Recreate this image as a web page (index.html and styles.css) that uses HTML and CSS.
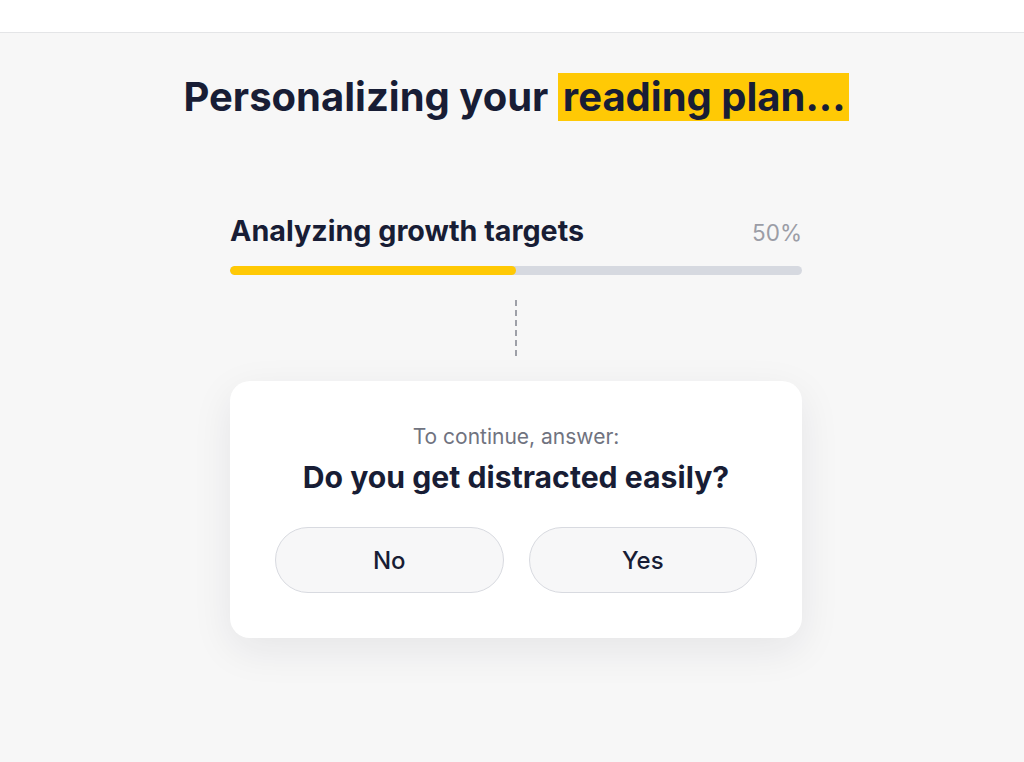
FILE: index.html
```html
<!DOCTYPE html>
<html lang="en">
<head>
<meta charset="utf-8">
<title>Personalizing your reading plan</title>
<link rel="stylesheet" href="styles.css">
</head>
<body>
<header class="topbar"></header>
<main class="page">
  <h1 class="title">Personalizing your <span class="hl">reading plan...</span></h1>
  <section class="progress">
    <div class="progress-head">
      <span class="progress-label">Analyzing growth targets</span>
      <span class="progress-pct">50%</span>
    </div>
    <div class="bar"><div class="bar-fill" style="width:50%"></div></div>
  </section>
  <div class="connector"></div>
  <section class="card">
    <p class="card-sub">To continue, answer:</p>
    <h2 class="card-q">Do you get distracted easily?</h2>
    <div class="choices">
      <button class="choice">No</button>
      <button class="choice">Yes</button>
    </div>
  </section>
</main>
</body>
</html>
```
FILE: styles.css
```css
* { box-sizing: border-box; }
html, body { margin: 0; padding: 0; }
body {
  background: #f7f7f7;
  font-family: Inter, Lato, sans-serif;
  color: #181d35;
  height: 762px;
  overflow: hidden;
}
.topbar {
  height: 33px;
  background: #ffffff;
  border-bottom: 1px solid #e4e5e7;
}
.page {
  display: flex;
  flex-direction: column;
  align-items: center;
  padding-left: 8px;
}
.title {
  margin: 40px 0 0;
  font-size: 40px;
  font-weight: 700;
  line-height: 48px;
  letter-spacing: 0;
}
.hl {
  display: inline-block;
  background: #ffc905;
  padding: 0 3px 0 5px;
}
.progress {
  width: 572px;
  margin-top: 92px;
}
.progress-head {
  display: flex;
  justify-content: space-between;
  align-items: baseline;
  line-height: 36px;
}
.progress-label {
  font-size: 28.7px;
  font-weight: 700;
}
.progress-pct {
  font-size: 22.5px;
  color: #9b9da6;
}
.bar {
  margin-top: 15px;
  height: 9px;
  border-radius: 5px;
  background: #d6d9e0;
  overflow: hidden;
}
.bar-fill {
  height: 100%;
  background: #ffc905;
  border-radius: 5px;
}
.connector {
  margin-top: 25px;
  height: 56px;
  width: 2px;
  background: repeating-linear-gradient(to bottom, #9ea0a8 0 6px, transparent 6px 10px);
}
.card {
  margin-top: 25px;
  width: 572px;
  background: #ffffff;
  border-radius: 20px;
  box-shadow: 0 12px 40px rgba(20, 25, 45, 0.08);
  padding: 44px 45px 45px;
  text-align: center;
}
.card-sub {
  margin: 0;
  font-size: 21px;
  color: #70737f;
  line-height: 24px;
}
.card-q {
  margin: 10px 0 0;
  font-size: 30.2px;
  font-weight: 700;
  line-height: 36px;
}
.choices {
  margin-top: 32px;
  display: grid;
  grid-template-columns: 1fr 1fr;
  gap: 25px;
}
.choice {
  height: 66px;
  border-radius: 33px;
  border: 1px solid #d8dae0;
  background: #f7f7f8;
  font-family: inherit;
  font-size: 24px;
  font-weight: 500;
  color: #181d35;
  cursor: pointer;
}
```
